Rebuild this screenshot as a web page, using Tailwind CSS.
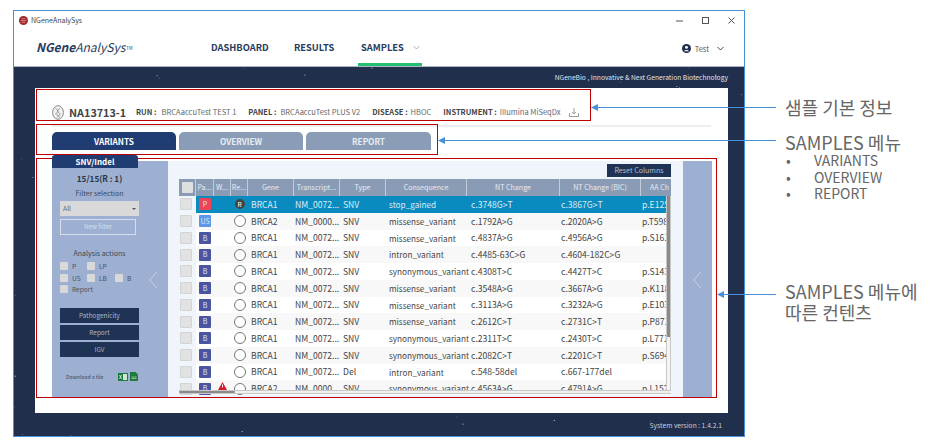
<!DOCTYPE html>
<html lang="en">
<head>
    <meta charset="UTF-8">
    <script src="https://cdn.jsdelivr.net/npm/@tailwindcss/browser@4"></script>
    <title>NGeneAnalySys</title>
</head>
<body class="bg-white font-['Noto_Sans_CJK_KR',sans-serif] overflow-hidden">
<div class="relative w-[942px] h-[447px] pl-[13px] pt-[10px]">

    <!-- Window -->
    <div class="w-[732px] h-[427px] border border-[#4a90d9] border-b-0 flex flex-col">
        <!-- Title bar -->
        <div class="h-[22px] shrink-0 flex items-center pl-[5px] pr-[9px] pb-[4px] text-[7px] text-[#444]">
            <svg class="w-[9px] h-[9px] mr-[3px]" viewBox="0 0 10 10"><circle cx="5" cy="5" r="5" fill="#a32a2a"/><path d="M2 5h6M3 3h4M3 7h4" stroke="#e8b0b0" stroke-width=".7"/></svg>
            <span>NGeneAnalySys</span>
            <div class="ml-auto flex items-center gap-[19px]">
                <svg class="w-[7px] h-[7px]" viewBox="0 0 7 7"><path d="M0 4h7" stroke="#555"/></svg>
                <svg class="w-[7px] h-[7px]" viewBox="0 0 7 7"><rect x=".5" y=".5" width="6" height="6" fill="none" stroke="#555"/></svg>
                <svg class="w-[7px] h-[7px]" viewBox="0 0 7 7"><path d="M.5.5l6 6M6.5.5l-6 6" stroke="#555"/></svg>
            </div>
        </div>

        <!-- Nav -->
        <div class="h-[33px] shrink-0 flex items-start relative pl-[22px] text-[#263c5c]">
            <div class="w-[175px] mt-[5px] text-[12px] italic leading-[18px]"><span class="font-semibold">NGene</span>AnalySys<sup class="text-[4.5px] not-italic ml-[1px]">TM</sup></div>
            <div class="w-[83px] mt-[7px] text-[9.3px] font-semibold leading-[14px]">DASHBOARD</div>
            <div class="w-[67px] mt-[7px] text-[9.3px] font-semibold leading-[14px]">RESULTS</div>
            <div class="mt-[7px] text-[9.3px] font-semibold leading-[14px]">SAMPLES</div>
            <svg class="w-[7px] h-[5px] mt-[12px] ml-[9px]" viewBox="0 0 7 5"><path d="M.5 1l3 3 3-3" fill="none" stroke="#99a" stroke-width=".8"/></svg>
            <div class="absolute left-[344px] bottom-0 w-[64px] h-[3px] bg-[#22c070]"></div>
            <div class="ml-auto mr-[20px] mt-[10px] flex items-center text-[7.5px] text-[#555]">
                <svg class="w-[9px] h-[9px] mr-[4px]" viewBox="0 0 10 10"><circle cx="5" cy="5" r="5" fill="#1e2f4d"/><circle cx="5" cy="3.8" r="1.6" fill="#fff"/><path d="M2.3 8a2.8 2 0 0 1 5.4 0z" fill="#fff"/></svg>
                <span>Test</span>
                <svg class="w-[7px] h-[5px] ml-[8px]" viewBox="0 0 7 5"><path d="M.5 1l3 3 3-3" fill="none" stroke="#333" stroke-width=".9"/></svg>
            </div>
        </div>

        <!-- Dark area -->
        <div id="stage" class="relative flex-1 bg-[#1f2f4c] border-t border-[#a9b4c4] flex flex-col">
            <svg id="stars" class="absolute inset-0 w-full h-full"></svg>
            <div class="relative h-[21px] shrink-0 flex items-center justify-end pr-[16px] text-[6.7px] text-[#dfe5ee]">NGeneBio , Innovative &amp; Next Generation Biotechnology</div>

            <!-- White panel -->
            <div class="relative ml-[21px] mr-[16px] h-[325px] shrink-0 bg-white pl-[17px] pr-[17px]">
                <!-- Sample info -->
                <div class="h-[37px] pt-[11px] flex items-center text-[#444]">
                    <svg class="w-[12px] h-[15px] mr-[5px]" viewBox="0 0 12 15"><ellipse cx="6" cy="7.5" rx="5.4" ry="6.8" fill="#f2f2f2" stroke="#888"/><path d="M3.5 3.5c4 2 1 4 4.500 5M8 3.500c-4 2-1 4-4.500 5M3.500 9c3 1 3 2 1.500 3.500M8.500 9c-2 1-2 2-1 3.500" fill="none" stroke="#777" stroke-width=".7"/></svg>
                    <span class="text-[10.8px] font-bold w-[67px]">NA13713-1</span>
                    <span class="text-[7.5px] font-bold mr-[5px]">RUN :</span><span class="text-[7.5px] text-[#666] mr-[12px]">BRCAaccuTest TEST 1</span>
                    <span class="text-[7.5px] font-bold mr-[4px]">PANEL :</span><span class="text-[7.5px] text-[#666] mr-[12px]">BRCAaccuTest PLUS V2</span>
                    <span class="text-[7.5px] font-bold mr-[3px]">DISEASE :</span><span class="text-[7.5px] text-[#666] mr-[12px]">HBOC</span>
                    <span class="text-[7.5px] font-bold mr-[3px]">INSTRUMENT :</span><span class="text-[7.5px] text-[#667] mr-[8px]">Illumina MiSeqDx</span>
                    <svg class="w-[10px] h-[9px]" viewBox="0 0 10 9"><path d="M5 0v6M3 4l2 2 2-2M.5 5v3.500h9V5" fill="none" stroke="#888" stroke-width=".8"/></svg>
                </div>
                <div class="h-[2px] bg-[#eeeeee]"></div>

                <!-- Tabs -->
                <div class="mt-[5px] flex gap-[3px] text-[8.2px] font-semibold text-white">
                    <div class="w-[124px] h-[18px] rounded-t-[5px] bg-[#1f3d73] flex items-center justify-center">VARIANTS</div>
                    <div class="w-[124px] h-[18px] rounded-t-[5px] bg-[#8b9db6] flex items-center justify-center text-[#e8edf4]">OVERVIEW</div>
                    <div class="w-[125px] h-[18px] rounded-t-[5px] bg-[#8b9db6] flex items-center justify-center text-[#e8edf4]">REPORT</div>
                </div>

                <!-- Samples content -->
                <div class="flex items-start mt-[5px] h-[243px]">
                    <!-- Left panel -->
                    <div class="w-[116px] shrink-0 flex flex-col">
                        <div class="relative z-10 w-[86px] h-[13px] -mb-[7px] rounded-t-[3px] bg-[#1f3d73] text-white text-[8px] font-bold flex items-center justify-center leading-none">SNV/Indel</div>
                        <div class="relative h-[237px] bg-[#9db0d1] pl-[8px] text-[#3c4656]">
                            <div class="w-[79px] text-center pt-[11px] text-[8.2px] font-bold text-[#2a3545] leading-[12px]">15/15(R : 1)</div>
                            <div class="w-[79px] text-center mt-[4px] text-[7px] leading-[11px]">Filter selection</div>
                            <div class="mt-[2px] w-[79px] h-[15px] bg-[#d9d9d9] flex items-center justify-between px-[3px] text-[6.8px] text-[#666]">All<span class="w-0 h-0 border-x-[2px] border-x-transparent border-t-[2px] border-t-[#555]"></span></div>
                            <div class="mt-[3px] w-[76px] h-[16px] border border-[#d5deec] flex items-center justify-center text-[6.2px] text-[#d5deec]">New filter</div>
                            <div class="w-[79px] text-center mt-[13px] text-[7px] leading-[11px]">Analysis actions</div>
                            <div class="mt-[3px] flex flex-col gap-[2.5px] text-[6.6px] leading-[9px] text-[#4b5564]">
                                <div class="flex"><span class="w-[8px] h-[8px] rounded-[1px] bg-[#d9d9d9] mr-[4px]"></span><span class="w-[15px]">P</span><span class="w-[8px] h-[8px] rounded-[1px] bg-[#d9d9d9] mr-[4px]"></span><span>LP</span></div>
                                <div class="flex"><span class="w-[8px] h-[8px] rounded-[1px] bg-[#d9d9d9] mr-[4px]"></span><span class="w-[15px]">US</span><span class="w-[8px] h-[8px] rounded-[1px] bg-[#d9d9d9] mr-[4px]"></span><span class="w-[16px]">LB</span><span class="w-[8px] h-[8px] rounded-[1px] bg-[#d9d9d9] mr-[4px]"></span><span>B</span></div>
                                <div class="flex"><span class="w-[8px] h-[8px] rounded-[1px] bg-[#d9d9d9] mr-[4px]"></span><span>Report</span></div>
                            </div>
                            <div class="mt-[14px] w-[79px] flex flex-col gap-[2px] text-[6.4px] text-[#a9b6ca]">
                                <div class="h-[15px] bg-[#1f3355] flex items-center justify-center">Pathogenicity</div>
                                <div class="h-[15px] bg-[#1f3355] flex items-center justify-center">Report</div>
                                <div class="h-[15px] bg-[#1f3355] flex items-center justify-center">IGV</div>
                            </div>
                            <div class="mt-[15px] flex items-center pl-[6px] text-[5.2px] text-[#3c4656]">
                                <span class="w-[52px]">Download a file</span>
                                <svg class="w-[10px] h-[8px] mr-[2px]" viewBox="0 0 10 8"><rect width="10" height="8" fill="#1f7a3d"/><rect x="5" y="1" width="4" height="6" fill="#cfe6d6"/><path d="M1.500 2l2 4M3.500 2l-2 4" stroke="#fff" stroke-width=".7"/></svg>
                                <svg class="w-[8px] h-[9px]" viewBox="0 0 8 9"><path d="M0 0h5.500L8 2.500V9H0z" fill="#1f7a3d"/><path d="M1.500 5h5M1.500 6.500h5" stroke="#cfe6d6" stroke-width=".6"/></svg>
                            </div>
                            <svg class="absolute left-[97px] top-[111px] w-[8px] h-[16px]" viewBox="0 0 8 16"><path d="M8 0L.5 8 8 16" fill="none" stroke="#d5deec" stroke-width=".8"/></svg>
                        </div>
                    </div>

                    <!-- Table area -->
                    <div class="w-[515px] h-[237px] shrink-0 mt-[6px] bg-[#f0f4fb] pl-[11px] pr-[12px] pt-[3px]">
                        <div class="flex justify-end h-[15px]">
                            <div class="w-[64px] h-[13px] bg-[#1f3355] text-[#b6c0cf] text-[7.1px] flex items-center justify-center">Reset Columns</div>
                        </div>
                        <div class="relative h-[216px] overflow-hidden">
                            <div class="flex h-[17px] bg-[#8a9bb5] text-[#e6ebf2] text-[7.1px] divide-x divide-[#c3ccd9]">
                                <div class="w-[17px] shrink-0 flex items-center justify-center"><span class="w-[11px] h-[11px] bg-[#dfdfdf] rounded-[1px]"></span></div>
                                <div class="w-[18px] shrink-0 flex items-center justify-center">Pa...</div>
                                <div class="w-[17px] shrink-0 flex items-center justify-center">W...</div>
                                <div class="w-[17px] shrink-0 flex items-center justify-center">Re...</div>
                                <div class="w-[46px] shrink-0 flex items-center justify-center">Gene</div>
                                <div class="w-[46px] shrink-0 flex items-center justify-center">Transcript...</div>
                                <div class="w-[46px] shrink-0 flex items-center justify-center">Type</div>
                                <div class="w-[81px] shrink-0 flex items-center justify-center">Consequence</div>
                                <div class="w-[93px] shrink-0 flex items-center justify-center">NT Change</div>
                                <div class="w-[81px] shrink-0 flex items-center justify-center">NT Change (BIC)</div>
                                <div class="flex-1 flex items-center pl-[9px] overflow-hidden whitespace-nowrap">AA Ch</div>
                            </div>
                            <div id="rows" class="text-[8.6px] text-[#444]"></div>
                            <!-- Scrollbars -->
                            <div class="absolute right-0 top-[17px] bottom-[1px] w-[5px] bg-[#f4f4f4] border-x border-[#c8c8c8]">
                                <div class="h-[141px] bg-[#8a8a8a]"></div>
                            </div>
                            <div class="absolute left-0 right-0 bottom-[1px] h-[4px] bg-[#f0f0f0] border-y border-[#c8c8c8]">
                                <div class="w-[56px] h-full bg-[#8a8a8a] rounded-[2px]"></div>
                            </div>
                        </div>
                    </div>

                    <!-- Right panel -->
                    <div class="relative w-[29px] h-[237px] shrink-0 mt-[6px] bg-[#9db0d1]">
                        <svg class="absolute left-[10px] top-[111px] w-[8px] h-[16px]" viewBox="0 0 8 16"><path d="M8 0L.5 8 8 16" fill="none" stroke="#d5deec" stroke-width=".8"/></svg>
                    </div>
                </div>
            </div>

            <div class="relative flex-1 flex items-center justify-end pr-[22px] text-[6.7px] text-[#c6cfdc]">System version : 1.4.2.1</div>
        </div>
    </div>
    <div class="absolute left-[13px] top-[436px] w-[732px] h-px bg-[#4a90d9]"></div>

    <!-- Red highlight boxes -->
    <div class="absolute left-[36px] top-[89px] w-[555px] h-[32px] border border-[#c00000]"></div>
    <div class="absolute left-[36px] top-[124px] w-[402px] h-[31px] border border-[#c00000]"></div>
    <div class="absolute left-[36px] top-[158px] w-[681px] h-[240px] border border-[#c00000]"></div>

    <!-- Callout arrows -->
    <svg class="absolute inset-0 w-[942px] h-[447px] pointer-events-none" viewBox="0 0 942 447">
        <g stroke="#4a90d9" fill="#4a90d9">
            <path d="M597 107.500H776" fill="none"/><path d="M591 107.500l7-3.500v7z" stroke="none"/>
            <path d="M444 140.500H776" fill="none"/><path d="M438 140.500l7-3.500v7z" stroke="none"/>
            <path d="M723 294.500H776" fill="none"/><path d="M717 294.500l7-3.500v7z" stroke="none"/>
        </g>
    </svg>

    <!-- Callout labels -->
    <div class="absolute left-[785px] top-[94px] text-[18px] leading-[26px] text-[#666] whitespace-nowrap">샘플 기본 정보</div>
    <div class="absolute left-[785px] top-[130px] text-[18px] leading-[24px] text-[#666] whitespace-nowrap">SAMPLES 메뉴</div>
    <ul class="absolute left-[785px] top-[152px] text-[14px] leading-[16.500px] text-[#666]">
        <li class="flex"><span class="w-[29px] pl-[1px]">•</span>VARIANTS</li>
        <li class="flex"><span class="w-[29px] pl-[1px]">•</span>OVERVIEW</li>
        <li class="flex"><span class="w-[29px] pl-[1px]">•</span>REPORT</li>
    </ul>
    <div class="absolute left-[785px] top-[281px] text-[18px] leading-[21px] text-[#666] whitespace-nowrap">SAMPLES 메뉴에<br>따른 컨텐츠</div>
</div>

<script>
    const variants = [
        ['P', 'BRCA1', 'NM_0072...', 'SNV', 'stop_gained', 'c.3748G>T', 'c.3867G>T', 'p.E125'],
        ['US', 'BRCA2', 'NM_0000...', 'SNV', 'missense_variant', 'c.1792A>G', 'c.2020A>G', 'p.T598'],
        ['B', 'BRCA1', 'NM_0072...', 'SNV', 'missense_variant', 'c.4837A>G', 'c.4956A>G', 'p.S161'],
        ['B', 'BRCA1', 'NM_0072...', 'SNV', 'intron_variant', 'c.4485-63C>G', 'c.4604-182C>G', ''],
        ['B', 'BRCA1', 'NM_0072...', 'SNV', 'synonymous_variant', 'c.4308T>C', 'c.4427T>C', 'p.S143'],
        ['B', 'BRCA1', 'NM_0072...', 'SNV', 'missense_variant', 'c.3548A>G', 'c.3667A>G', 'p.K118'],
        ['B', 'BRCA1', 'NM_0072...', 'SNV', 'missense_variant', 'c.3113A>G', 'c.3232A>G', 'p.E103'],
        ['B', 'BRCA1', 'NM_0072...', 'SNV', 'missense_variant', 'c.2612C>T', 'c.2731C>T', 'p.P871'],
        ['B', 'BRCA1', 'NM_0072...', 'SNV', 'synonymous_variant', 'c.2311T>C', 'c.2430T>C', 'p.L771'],
        ['B', 'BRCA1', 'NM_0072...', 'SNV', 'synonymous_variant', 'c.2082C>T', 'c.2201C>T', 'p.S694'],
        ['B', 'BRCA1', 'NM_0072...', 'Del', 'intron_variant', 'c.548-58del', 'c.667-177del', ''],
        ['B', 'BRCA2', 'NM_0000...', 'SNV', 'synonymous_variant', 'c.4563A>G', 'c.4791A>G', 'p.L152']
    ];
    const badgeColor = { P: 'bg-[#ee4455]', US: 'bg-[#5b96e8]', B: 'bg-[#4a55a2]' };

    document.getElementById('rows').innerHTML = variants.map((v, i) => {
        const selected = i === 0;
        const rowColor = selected ? 'bg-[#0a8bc0] text-[#dcebf5]' : (i % 2 ? 'bg-[#f8f8f8]' : 'bg-white');
        const review = selected
            ? '<span class="w-[10px] h-[10px] rounded-full bg-[#444] text-white text-[6.5px] flex items-center justify-center">R</span>'
            : '<span class="w-[12px] h-[12px] rounded-full border border-[#777] bg-white"></span>';
        const warn = i === 11
            ? '<svg class="w-[9px] h-[8px] -mt-[5px]" viewBox="0 0 9 8"><path d="M4.500 0L9 8H0z" fill="#d9152a"/><path d="M4.500 2.500v3" stroke="#fff"/></svg>'
            : '';
        return `
            <div class="flex h-[16.75px] whitespace-nowrap">
                <div class="w-[17px] shrink-0 bg-[#f0f4fb] flex items-center pl-[1px]"><span class="w-[12px] h-[12px] bg-[#e2e2e2] border border-[#d4d4d4] rounded-[1px]"></span></div>
                <div class="flex-1 flex ${rowColor}">
                    <div class="w-[18px] shrink-0 flex items-center pl-[3px]"><span class="w-[12px] h-[12px] rounded-[1px] ${badgeColor[v[0]]} text-[#dfe6f5] text-[7px] flex items-center justify-center">${v[0]}</span></div>
                    <div class="w-[17px] shrink-0 flex items-center justify-center">${warn}</div>
                    <div class="w-[17px] shrink-0 flex items-center justify-center">${review}</div>
                    <div class="w-[46px] shrink-0 flex items-center pl-[3px]">${v[1]}</div>
                    <div class="w-[46px] shrink-0 flex items-center pl-[1px]">${v[2]}</div>
                    <div class="w-[46px] shrink-0 flex items-center pl-[3px]">${v[3]}</div>
                    <div class="w-[81px] shrink-0 flex items-center pl-[3px] text-[8.2px]">${v[4]}</div>
                    <div class="w-[93px] shrink-0 flex items-center pl-[4px]">${v[5]}</div>
                    <div class="w-[81px] shrink-0 flex items-center pl-[1px]">${v[6]}</div>
                    <div class="flex-1 flex items-center pl-[1px] overflow-hidden">${v[7]}</div>
                </div>
            </div>`;
    }).join('');

    // Speckled background of the dark area
    let seed = 7;
    const rand = () => (seed = (seed * 16807) % 2147483647) / 2147483647;
    let dots = '';
    for (let i = 0; i < 170; i++) {
        dots += `<circle cx="${(rand() * 732).toFixed(1)}" cy="${(rand() * 370).toFixed(1)}" r="${(0.3 + rand() * 0.4).toFixed(2)}" fill="#b4c0d4"/>`;
    }
    document.getElementById('stars').innerHTML = dots;
</script>
</body>
</html>
